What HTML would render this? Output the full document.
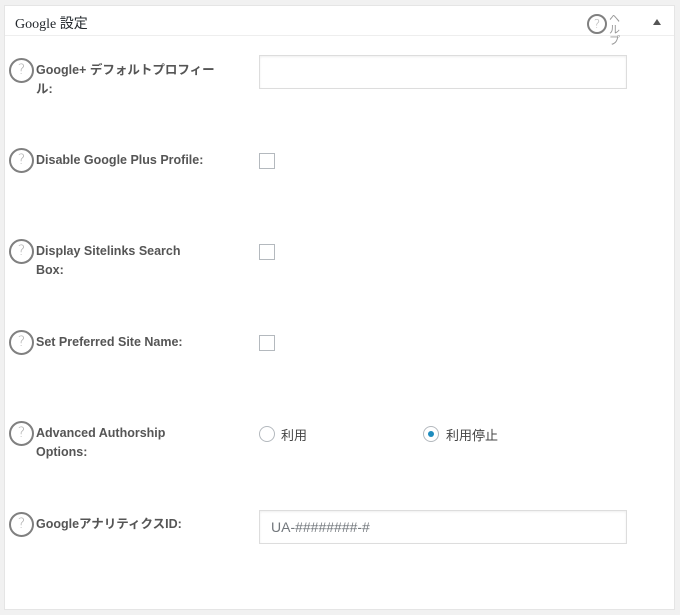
<!DOCTYPE html>
<html><head><meta charset="utf-8"><style>
body{margin:0;width:680px;height:615px;background:#f1f1f1;position:relative;overflow:hidden;font-family:"Liberation Sans","Noto Sans CJK JP",sans-serif}
.panel{position:absolute;left:4px;top:5px;width:669px;height:603px;background:#fff;border:1px solid #e5e5e5}
.hdr{position:absolute;left:0;top:0;width:669px;height:29px;border-bottom:1px solid #eee}
.title{position:absolute;left:10px;top:7px;font-size:14px;color:#23282d;font-family:"Liberation Serif","Noto Sans CJK JP",serif}
.q{position:absolute;width:21px;height:21px;border:2px solid #808080;border-radius:50%;color:#aaa;font-size:14px;text-align:center;line-height:21px;font-family:"DejaVu Sans",sans-serif;font-weight:200}
.lbl{position:absolute;left:36px;font-size:12.5px;font-weight:bold;color:#555;line-height:19px;width:180px}
.inp{position:absolute;left:259px;width:366px;height:32px;border:1px solid #ddd;box-shadow:inset 0 1px 2px rgba(0,0,0,.07)}
.cb{position:absolute;left:259px;width:14px;height:14px;border:1px solid #b4b9be}
.rd{position:absolute;width:14px;height:14px;border:1px solid #b4b9be;border-radius:50%}
.rt{position:absolute;font-size:13px;color:#444}
</style></head><body>
<div class="panel">
<div class="hdr"><div class="title">Google 設定</div>
<div class="q" style="left:582px;top:8px;width:16px;height:16px;line-height:16px;font-size:12px">?</div>
<div style="position:absolute;left:604px;top:8px;font-size:11px;color:#999;width:12px;line-height:11px">ヘルプ</div>
<div style="position:absolute;left:648px;top:13px;width:0;height:0;border-left:4px solid transparent;border-right:4px solid transparent;border-bottom:6px solid #555"></div>
</div>
</div>
<div class="q" style="left:9px;top:58px">?</div>
<div class="lbl" style="top:61px">Google+ デフォルトプロフィール:</div>
<div class="inp" style="top:55px"></div>

<div class="q" style="left:9px;top:148px">?</div>
<div class="lbl" style="top:151px">Disable Google Plus Profile:</div>
<div class="cb" style="top:153px"></div>

<div class="q" style="left:9px;top:239px">?</div>
<div class="lbl" style="top:242px;width:160px">Display Sitelinks Search Box:</div>
<div class="cb" style="top:244px"></div>

<div class="q" style="left:9px;top:330px">?</div>
<div class="lbl" style="top:333px">Set Preferred Site Name:</div>
<div class="cb" style="top:335px"></div>

<div class="q" style="left:9px;top:421px">?</div>
<div class="lbl" style="top:424px;width:150px">Advanced Authorship Options:</div>
<div class="rd" style="left:259px;top:426px"></div>
<div class="rt" style="left:281px;top:425px">利用</div>
<div class="rd" style="left:423px;top:426px"><div style="position:absolute;left:4px;top:4px;width:6px;height:6px;border-radius:50%;background:#1e8cbe"></div></div>
<div class="rt" style="left:446px;top:425px">利用停止</div>

<div class="q" style="left:9px;top:512px">?</div>
<div class="lbl" style="top:515px">GoogleアナリティクスID:</div>
<div class="inp" style="top:510px"><span style="position:absolute;left:11px;top:8px;font-size:14px;color:#72777c">UA-########-#</span></div>
</body></html>
